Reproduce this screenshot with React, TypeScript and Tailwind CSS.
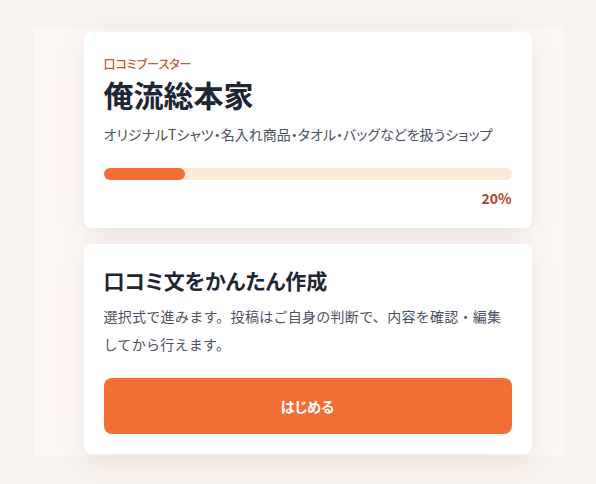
import React from "react";

const font = { fontFamily: '"Noto Sans CJK JP", "Noto Sans", sans-serif' };

function ShopCard() {
  const progress = 20;
  return (
    <div className="rounded-lg bg-white px-5 pt-6 pb-5 shadow-[0_8px_28px_rgba(110,70,50,0.10)]">
      <p className="text-xs leading-4 font-medium text-[#d4532c] [font-feature-settings:'palt']">
        口コミブースター
      </p>
      <h1 className="mt-1 text-[30px] leading-9 font-bold text-[#1e2533]">俺流総本家</h1>
      <p className="mt-3 text-sm leading-5 text-[#4b5260] [font-feature-settings:'palt']">
        オリジナルTシャツ・名入れ商品・タオル・バッグなどを扱うショップ
      </p>
      <div className="mt-6 h-3 w-full rounded-full bg-[#fdebd8]">
        <div className="h-3 rounded-full bg-[#f26e32]" style={{ width: `${progress}%` }} />
      </div>
      <p className="mt-2 text-right text-sm leading-5 font-semibold text-[#b5412b]">{progress}%</p>
    </div>
  );
}

function StartCard() {
  return (
    <div className="rounded-lg bg-white px-5 pt-5 pb-5 shadow-[0_8px_28px_rgba(110,70,50,0.10)]">
      <h2 className="text-[21px] leading-8 font-bold text-[#1e2533] [font-feature-settings:'palt']">
        口コミ文をかんたん作成
      </h2>
      <p className="mt-1.5 text-sm leading-7 tracking-[0.02em] text-[#4b5260]">
        選択式で進みます。投稿はご自身の判断で、内容を確認・編集してから行えます。
      </p>
      <button className="mt-5 flex h-14 w-full items-center justify-center rounded-lg bg-[#f26e32] text-sm font-bold text-white [font-feature-settings:'palt']">
        はじめる
      </button>
    </div>
  );
}

export default function App() {
  return (
    <div className="min-h-[484px] bg-[#f8f3ee] pt-7" style={font}>
      <div className="mx-auto w-[529px] bg-[#fdf7f3] pt-1 pb-0.5 pl-[50px] pr-[31px]">
        <div className="flex flex-col gap-4">
          <ShopCard />
          <StartCard />
        </div>
      </div>
    </div>
  );
}
